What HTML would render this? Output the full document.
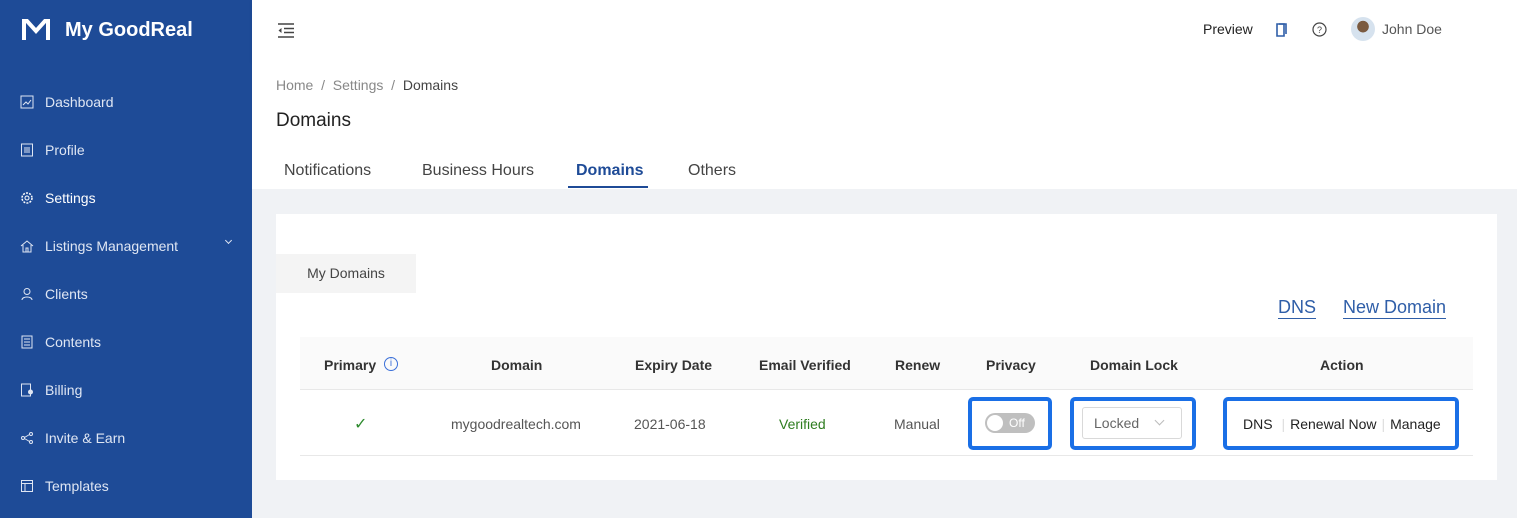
<!DOCTYPE html>
<html><head><meta charset="utf-8"><style>
*{margin:0;padding:0;box-sizing:border-box}
body{width:1517px;height:518px;overflow:hidden;font-family:"Liberation Sans",sans-serif;background:#f0f2f5;position:relative;font-size:14px;color:#333}
.side{position:absolute;left:0;top:0;width:252px;height:518px;background:#1e4b97;color:#dfe6f3}
.logo{position:absolute;left:21px;top:18px;color:#fff;font-weight:bold;font-size:20px;display:flex;align-items:center;gap:14px}
.item{position:absolute;left:20px;display:flex;align-items:center;gap:11px;font-size:14px}
.item svg{width:14px;height:14px}
.hdr{position:absolute;left:252px;top:0;right:0;height:62px;background:#fff;box-shadow:0 1px 4px rgba(0,0,0,.06)}
.top{position:absolute;left:252px;top:62px;right:0;height:127px;background:#fff}
.abs{position:absolute}
.card{position:absolute;left:276px;top:214px;width:1221px;height:266px;background:#fff}
.hl{position:absolute;border:4px solid #1a6fe6;border-radius:5px}
.chev{display:inline-block;width:7px;height:7px;border-right:1px solid #aaa;border-bottom:1px solid #aaa;transform:rotate(45deg)}
</style></head><body>
<div class="side">
 <div class="logo"><svg width="30" height="24" viewBox="0 0 30 24"><path d="M3 22V3h3l9 10 9-10h3v19" fill="none" stroke="#fff" stroke-width="4"/></svg>My GoodReal</div>
 <div class="item" style="top:94px"><svg viewBox="0 0 14 14"><rect x="1" y="1" width="12" height="12" fill="none" stroke="#dfe6f3"/><path d="M3 10l3-3 2 2 3-4" fill="none" stroke="#dfe6f3"/></svg>Dashboard</div>
 <div class="item" style="top:142px"><svg viewBox="0 0 14 14"><rect x="1.5" y="1" width="11" height="12" fill="none" stroke="#dfe6f3"/><path d="M4 5h6M4 7h6M4 9h6" stroke="#dfe6f3"/></svg>Profile</div>
 <div class="item" style="top:190px;color:#fff"><svg viewBox="0 0 14 14"><circle cx="7" cy="7" r="5" fill="none" stroke="#fff" stroke-width="1.5" stroke-dasharray="2 1.2"/><circle cx="7" cy="7" r="2" fill="none" stroke="#fff"/></svg>Settings</div>
 <div class="item" style="top:238px"><svg viewBox="0 0 14 14"><path d="M1 7l6-5 6 5M3 6v7h8V6M6 13V9h2v4" fill="none" stroke="#dfe6f3"/></svg>Listings Management</div>
 <div class="abs" style="left:226px;top:238px;line-height:0"><span class="chev" style="width:5px;height:5px;border-color:#dfe6f3"></span></div>
 <div class="item" style="top:286px"><svg viewBox="0 0 14 14"><circle cx="7" cy="4.5" r="3" fill="none" stroke="#dfe6f3"/><path d="M2 13c0-4 10-4 10 0" fill="none" stroke="#dfe6f3"/></svg>Clients</div>
 <div class="item" style="top:334px"><svg viewBox="0 0 14 14"><rect x="2" y="1" width="10" height="12" fill="none" stroke="#dfe6f3"/><path d="M4 4h6M4 7h6M4 10h6" stroke="#dfe6f3"/></svg>Contents</div>
 <div class="item" style="top:382px"><svg viewBox="0 0 14 14"><rect x="1.5" y="1" width="9" height="12" fill="none" stroke="#dfe6f3"/><circle cx="10.5" cy="9" r="2.5" fill="#dfe6f3"/></svg>Billing</div>
 <div class="item" style="top:430px"><svg viewBox="0 0 14 14"><circle cx="3" cy="7" r="1.5" fill="none" stroke="#dfe6f3"/><circle cx="11" cy="3" r="1.5" fill="none" stroke="#dfe6f3"/><circle cx="11" cy="11" r="1.5" fill="none" stroke="#dfe6f3"/><path d="M4.5 6.5l5-3M4.5 7.5l5 3" stroke="#dfe6f3"/></svg>Invite &amp; Earn</div>
 <div class="item" style="top:478px"><svg viewBox="0 0 14 14"><rect x="1.5" y="1.5" width="11" height="11" fill="none" stroke="#dfe6f3"/><path d="M1.5 4.5h11M5 4.5v8" stroke="#dfe6f3"/></svg>Templates</div>
</div>
<div class="hdr">
 <svg class="abs" style="left:25px;top:23px" width="18" height="15" viewBox="0 0 18 15"><path d="M1 1h16M7 5.5h10M7 9.5h10M1 14h16" stroke="#444" stroke-width="1.5"/><path d="M4.5 5L1.5 7.5 4.5 10z" fill="#444"/></svg>
 <div class="abs" style="left:951px;top:21px;color:#222">Preview</div>
 <svg class="abs" style="left:1024px;top:23px" width="11" height="14" viewBox="0 0 11 14"><path d="M1 1h7v12H1z" fill="none" stroke="#2f5ea8" stroke-width="1.6"/><path d="M3 1h7v10" fill="none" stroke="#2f5ea8" stroke-width="1.6"/></svg>
 <svg class="abs" style="left:1060px;top:22px" width="15" height="15" viewBox="0 0 15 15"><circle cx="7.5" cy="7.5" r="6.5" fill="none" stroke="#444" stroke-width="1.2"/><text x="7.5" y="11" font-size="9" text-anchor="middle" fill="#444" font-family="Liberation Sans">?</text></svg>
 <div class="abs" style="left:1099px;top:17px;width:24px;height:24px;border-radius:50%;background:radial-gradient(circle at 50% 40%,#7a5a40 30%,#d6e2ee 32%)"></div>
 <div class="abs" style="left:1130px;top:21px;color:#555">John Doe</div>
</div>
<div class="top">
 <div class="abs" style="left:24px;top:15px;color:#888">Home&nbsp; / &nbsp;Settings&nbsp; / &nbsp;<span style="color:#444">Domains</span></div>
 <div class="abs" style="left:24px;top:48px;font-size:19px;color:#222">Domains</div>
 <div class="abs" style="left:32px;top:100px;font-size:16px;color:#444">Notifications</div>
 <div class="abs" style="left:170px;top:100px;font-size:16px;color:#444">Business Hours</div>
 <div class="abs" style="left:324px;top:100px;font-size:16px;color:#1e4b97;font-weight:bold">Domains</div>
 <div class="abs" style="left:316px;top:124px;width:80px;height:2px;background:#1e4b97"></div>
 <div class="abs" style="left:436px;top:100px;font-size:16px;color:#444">Others</div>
</div>
<div class="card">
 <div class="abs" style="left:0;top:40px;width:140px;height:39px;background:#f4f4f4;text-align:center;line-height:39px;color:#444">My Domains</div>
 <div class="abs" style="left:1002px;top:82px;font-size:18px;color:#2f5ea8;border-bottom:1px solid #2f5ea8;line-height:22px">DNS</div>
 <div class="abs" style="left:1067px;top:82px;font-size:18px;color:#2f5ea8;border-bottom:1px solid #2f5ea8;line-height:22px">New Domain</div>
 <div class="abs" style="left:24px;top:123px;width:1173px;height:53px;background:#fafafa;border-bottom:1px solid #e8e8e8"></div>
 <div class="abs" style="left:24px;top:241px;width:1173px;height:1px;background:#e8e8e8"></div>
 <div class="abs" style="left:48px;top:143px;font-weight:bold;color:#333">Primary</div>
 <div class="abs" style="left:108px;top:143px;width:14px;height:14px;border:1px solid #3a6fd8;border-radius:50%;color:#3a6fd8;font-size:10px;line-height:12px;text-align:center">i</div>
 <div class="abs" style="left:215px;top:143px;font-weight:bold">Domain</div>
 <div class="abs" style="left:359px;top:143px;font-weight:bold">Expiry Date</div>
 <div class="abs" style="left:483px;top:143px;font-weight:bold">Email Verified</div>
 <div class="abs" style="left:619px;top:143px;font-weight:bold">Renew</div>
 <div class="abs" style="left:710px;top:143px;font-weight:bold">Privacy</div>
 <div class="abs" style="left:814px;top:143px;font-weight:bold">Domain Lock</div>
 <div class="abs" style="left:1044px;top:143px;font-weight:bold">Action</div>
 <div class="abs" style="left:78px;top:200px;color:#2e8b2e;font-size:16px">&#10003;</div>
 <div class="abs" style="left:175px;top:202px;color:#555">mygoodrealtech.com</div>
 <div class="abs" style="left:358px;top:202px;color:#555">2021-06-18</div>
 <div class="abs" style="left:503px;top:202px;color:#2e7d1f">Verified</div>
 <div class="abs" style="left:618px;top:202px;color:#555">Manual</div>
 <div class="abs" style="left:709px;top:199px;width:50px;height:20px;border-radius:10px;background:#bfbfbf"><div style="position:absolute;left:2px;top:2px;width:16px;height:16px;border-radius:50%;background:#fff"></div><span style="position:absolute;left:24px;top:3px;font-size:12px;color:#fff">Off</span></div>
 <div class="abs" style="left:806px;top:193px;width:100px;height:32px;border:1px solid #d9d9d9;border-radius:3px;color:#666;padding:7px 11px">Locked<span class="chev" style="position:absolute;right:18px;top:9px;border-color:#bbb"></span></div>
 <div class="abs" style="left:967px;top:202px;color:#222">DNS <span style="color:#ddd;margin:0 5px">|</span>Renewal Now<span style="color:#ddd;margin:0 5px">|</span>Manage</div>
</div>
<div class="hl" style="left:968px;top:397px;width:84px;height:53px"></div>
<div class="hl" style="left:1070px;top:397px;width:126px;height:53px"></div>
<div class="hl" style="left:1223px;top:397px;width:236px;height:53px"></div>
</body></html>
